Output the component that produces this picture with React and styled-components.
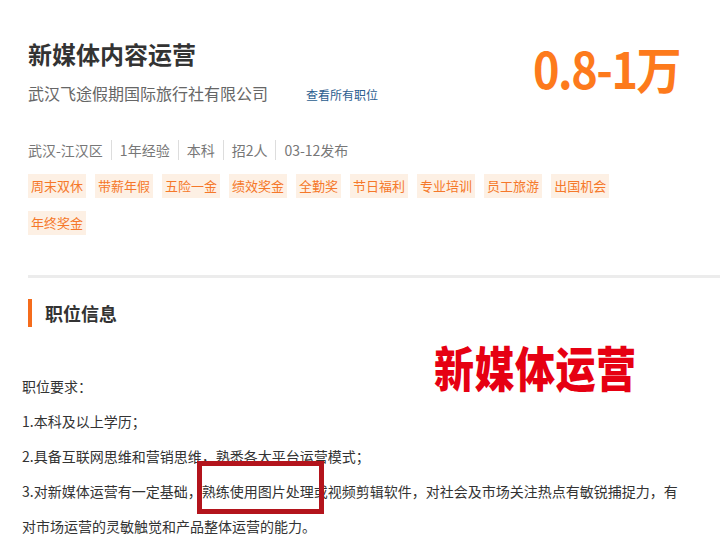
import React from "react";
import styled, { createGlobalStyle } from "styled-components";

const GlobalStyle = createGlobalStyle`
  body {
    margin: 0;
    background: #ffffff;
    font-family: "Noto Sans CJK SC", "Noto Sans", sans-serif;
  }
`;

const Page = styled.div`
  width: 726px;
  height: 560px;
  overflow: hidden;
  background: #fff;
`;

const Header = styled.div`
  display: flex;
  justify-content: space-between;
  align-items: flex-start;
  padding: 36px 46px 0 28px;
`;

const TitleBlock = styled.div`
  display: flex;
  flex-direction: column;
`;

const Title = styled.h1`
  margin: 0;
  font-size: 24px;
  line-height: 36px;
  font-weight: 700;
  color: #333;
`;

const CompanyRow = styled.div`
  display: flex;
  align-items: baseline;
  gap: 38px;
  margin-top: 9px;
`;

const Company = styled.span`
  font-size: 16px;
  line-height: 24px;
  color: #666;
`;

const AllJobs = styled.a`
  font-size: 12px;
  color: #2b5d8f;
  text-decoration: none;
`;

const Salary = styled.div`
  font-size: 45px;
  line-height: 50px;
  font-weight: 700;
  color: #fd7a1c;
  margin-top: 7px;
  letter-spacing: -1.5px;
  transform: scaleY(1.1);
`;

const Meta = styled.div`
  display: flex;
  align-items: center;
  padding: 0 28px;
  margin-top: 35px;
  font-size: 14px;
  line-height: 20px;
  color: #777;
`;

const MetaItem = styled.span`
  padding: 0 8px;
  border-left: 1px solid #ddd;

  &:first-child {
    padding-left: 0;
    border-left: none;
  }
`;

const Tags = styled.div`
  display: flex;
  flex-wrap: wrap;
  gap: 13px 9px;
  width: 600px;
  margin: 14px 0 0 28px;
`;

const Tag = styled.span`
  padding: 0 3px;
  font-size: 13px;
  line-height: 24px;
  color: #f5782a;
  background: #fdf0e4;
`;

const Divider = styled.div`
  height: 3px;
  margin: 40px 6px 0 28px;
  background: #ececec;
`;

const SectionTitle = styled.h2`
  margin: 21px 0 0 28px;
  padding-left: 13px;
  border-left: 4px solid #f56c1c;
  font-size: 18px;
  line-height: 28px;
  font-weight: 700;
  color: #333;
`;

const Body = styled.div`
  position: relative;
  padding: 42px 0 0 22px;
  width: 664px;
`;

const Line = styled.p`
  margin: 0;
  font-size: 14px;
  line-height: 35px;
  color: #333;
`;

const Stamp = styled.div`
  position: absolute;
  left: 434px;
  top: 10px;
  font-size: 40px;
  line-height: 50px;
  font-weight: 900;
  color: #e60012;
  letter-spacing: 0.5px;
  transform: scaleY(1.2);
  transform-origin: left top;
`;

const Highlight = styled.div`
  position: absolute;
  left: 197px;
  top: 134px;
  width: 117px;
  height: 43px;
  border: 5px solid #b3141c;
`;

const tags = [
  "周末双休",
  "带薪年假",
  "五险一金",
  "绩效奖金",
  "全勤奖",
  "节日福利",
  "专业培训",
  "员工旅游",
  "出国机会",
  "年终奖金",
];

const meta = ["武汉-江汉区", "1年经验", "本科", "招2人", "03-12发布"];

export default function App() {
  return (
    <Page>
      <GlobalStyle />
      <Header>
        <TitleBlock>
          <Title>新媒体内容运营</Title>
          <CompanyRow>
            <Company>武汉飞途假期国际旅行社有限公司</Company>
            <AllJobs href="#">查看所有职位</AllJobs>
          </CompanyRow>
        </TitleBlock>
        <Salary>0.8-1万</Salary>
      </Header>
      <Meta>
        {meta.map((m) => (
          <MetaItem key={m}>{m}</MetaItem>
        ))}
      </Meta>
      <Tags>
        {tags.map((t) => (
          <Tag key={t}>{t}</Tag>
        ))}
      </Tags>
      <Divider />
      <SectionTitle>职位信息</SectionTitle>
      <Body>
        <Line>职位要求：</Line>
        <Line>1.本科及以上学历；</Line>
        <Line>2.具备互联网思维和营销思维，熟悉各大平台运营模式；</Line>
        <Line>
          3.对新媒体运营有一定基础，熟练使用图片处理或视频剪辑软件，对社会及市场关注热点有敏锐捕捉力，有对市场运营的灵敏触觉和产品整体运营的能力。
        </Line>
        <Stamp>新媒体运营</Stamp>
        <Highlight />
      </Body>
    </Page>
  );
}
